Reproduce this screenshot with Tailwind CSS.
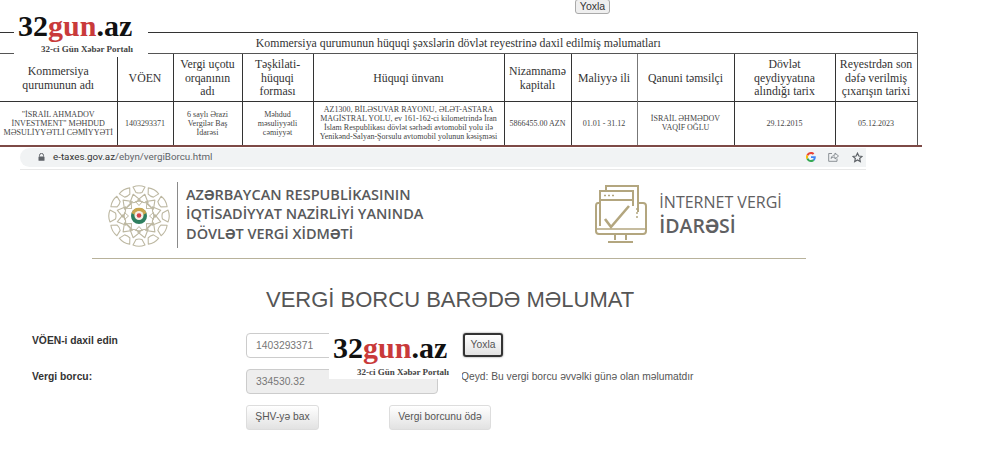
<!DOCTYPE html>
<html lang="az">
<head>
    <meta charset="UTF-8">
    <script src="https://cdn.jsdelivr.net/npm/@tailwindcss/browser@4"></script>
    <title>Vergi borcu</title>
</head>
<body class="bg-white">
<div class="relative w-[1000px] h-[452px] overflow-hidden font-['Liberation_Sans',sans-serif]">

    <!-- top button -->
    <div class="h-[33px] pl-[575px]">
        <button class="block w-[35px] h-[15px] -mt-px border border-[#aaa] rounded-[3px] bg-[#efefef] text-[10.5px] leading-[13px] text-[#333]">Yoxla</button>
    </div>

    <!-- registry table -->
    <table class="table-fixed border-collapse w-[917px] font-['Liberation_Serif',serif] text-[#333] text-center">
        <colgroup>
            <col class="w-[117px]"><col class="w-[56px]"><col class="w-[69px]"><col class="w-[71px]"><col class="w-[191px]"><col class="w-[67px]"><col class="w-[66px]"><col class="w-[97px]"><col class="w-[101px]"><col class="w-[82px]">
        </colgroup>
        <tbody>
            <tr class="h-[21px] border-t border-[#333]">
                <td colspan="10" class="border-r border-b border-[#555] text-[11.8px] leading-[14px] p-0">Kommersiya qurumunun hüquqi şəxslərin dövlət reyestrinə daxil edilmiş məlumatları</td>
            </tr>
            <tr class="h-[48px] text-[11.8px] leading-[13.4px] border-b border-[#333]">
                <td class="border-r border-[#333] p-0 pt-[2px]">Kommersiya<br>qurumunun adı</td>
                <td class="border-r border-[#333] p-0 pt-[2px]">VÖEN</td>
                <td class="border-r border-[#333] p-0 pt-[2px]">Vergi uçotu<br>orqanının<br>adı</td>
                <td class="border-r border-[#333] p-0 pt-[2px]">Təşkilati-<br>hüquqi<br>forması</td>
                <td class="border-r border-[#333] p-0 pt-[2px]">Hüquqi ünvanı</td>
                <td class="border-r border-[#333] p-0 pt-[2px]">Nizamnamə<br>kapitalı</td>
                <td class="border-r border-[#777] p-0 pt-[2px]">Maliyyə ili</td>
                <td class="border-r border-[#333] p-0 pt-[2px]">Qanuni təmsilçi</td>
                <td class="border-r border-[#333] p-0 pt-[2px]">Dövlət<br>qeydiyyatına<br>alındığı tarix</td>
                <td class="border-r border-[#555] p-0 pt-[2px]">Reyestrdən son<br>dəfə verilmiş<br>çıxarışın tarixi</td>
            </tr>
            <tr class="h-[43px] text-[8px] leading-[9px] text-[#444]">
                <td class="border-r border-[#333] p-0 text-[8.1px]">"İSRAİL AHMADOV<br>İNVESTMENT" MƏHDUD<br>MƏSULİYYƏTLİ CƏMİYYƏTİ</td>
                <td class="border-r border-[#333] p-0">1403293371</td>
                <td class="border-r border-[#333] p-0">6 saylı Ərazi<br>Vergilər Baş<br>İdarəsi</td>
                <td class="border-r border-[#333] p-0">Məhdud<br>məsuliyyətli<br>cəmiyyət</td>
                <td class="border-r border-[#333] p-0">AZ1300, BİLƏSUVAR RAYONU, ƏLƏT-ASTARA<br>MAGİSTRAL YOLU, ev 161-162-ci kilometrində İran<br>İslam Respublikası dövlət sərhədi avtomobil yolu ilə<br>Yenikənd-Salyan-Şorsulu avtomobil yolunun kəsişməsi</td>
                <td class="border-r border-[#333] p-0">5866455.00 AZN</td>
                <td class="border-r border-[#777] p-0">01.01 - 31.12</td>
                <td class="border-r border-[#333] p-0">İSRAİL ƏHMƏDOV<br>VAQİF OĞLU</td>
                <td class="border-r border-[#333] p-0">29.12.2015</td>
                <td class="border-r border-[#555] p-0">05.12.2023</td>
            </tr>
        </tbody>
    </table>
    <div class="w-[922px] h-[2px] bg-[#7d4a46]"></div>

    <!-- address bar -->
    <div class="ml-[20px] w-[846px] h-[19px] mt-[1px] flex items-center bg-[#f1f3f4] rounded-l-[10px] pl-[18px] pr-[4px] text-[#5f6368]">
        <svg class="w-[7px] h-[8px] mr-[8px]" viewBox="0 0 7 8"><path d="M1.500 3.500V2.400a2 2 0 0 1 4 0v1.100" fill="none" stroke="#5f6368"/><rect x="0.500" y="3.400" width="6" height="4.400" rx="0.600" fill="#5f6368"/></svg>
        <span class="text-[9.8px] leading-[12px] -mt-px font-['Roboto',sans-serif]"><span class="text-[#333]">e-taxes.gov.az</span>/ebyn/vergiBorcu.html</span>
        <svg class="ml-auto w-[10px] h-[10px]" viewBox="0 0 48 48">
            <path fill="#EA4335" d="M24 9.500c3.500 0 6.700 1.200 9.200 3.600l6.900-6.900C35.900 2.400 30.500 0 24 0 14.600 0 6.500 5.400 2.600 13.200l8 6.200C12.500 13.700 17.800 9.500 24 9.500z"/>
            <path fill="#4285F4" d="M47 24.500c0-1.600-.1-3.100-.4-4.500H24v9h12.900c-.6 3-2.200 5.500-4.700 7.200l7.700 6C44.400 37.600 47 31.600 47 24.500z"/>
            <path fill="#FBBC05" d="M10.500 28.600a14.500 14.500 0 0 1 0-9.200l-8-6.200a24 24 0 0 0 0 21.600l8-6.200z"/>
            <path fill="#34A853" d="M24 48c6.500 0 11.900-2.100 15.900-5.800l-7.700-6c-2.200 1.400-4.900 2.300-8.200 2.300-6.200 0-11.500-4.200-13.400-9.900l-8 6.200C6.500 42.600 14.600 48 24 48z"/>
        </svg>
        <svg class="ml-[12px] w-[11px] h-[10px]" viewBox="0 0 11 10" fill="none" stroke="#80868b" stroke-width="0.900"><path d="M4 1.500H0.700V9.300H9V6.500"/><path d="M3 6.500C3.500 4 5.500 3 7 3V1l3.500 3L7 7V5C5.500 5 4 5.300 3 6.500z"/></svg>
        <svg class="ml-[13px] mr-[-1px] w-[11px] h-[11px]" viewBox="0 0 24 24" fill="none" stroke="#5f6368" stroke-width="2.600"><path d="M12 2.500l2.900 6.200 6.800.8-5 4.600 1.400 6.700-6.100-3.400-6.100 3.400 1.400-6.700-5-4.600 6.800-.8z"/></svg>
    </div>
    <div class="ml-[20px] w-[846px] h-px mt-[2px] bg-[#e8e8e8]"></div>

    <!-- page header -->
    <div class="ml-[92px] w-[714px] h-[89px] border-b border-[#b8b29b] flex items-start pt-[12px]">
        <svg class="ml-[15px] mt-[2px] w-[64px] h-[64px] shrink-0" viewBox="-32 -32 64 64">
            <defs>
                <path id="outer" d="M-6 -29 Q0 -31.500 6 -29 L3 -23.500 Q0 -22.500 -3 -23.500 Z" fill="none" stroke="#bdb8a2" stroke-width="1.100" stroke-linejoin="round"/>
                <path id="middle" d="M0 -22.500 L5.500 -15 Q0 -13.500 -5.500 -15 Z" fill="none" stroke="#bdb8a2" stroke-width="1.100" stroke-linejoin="round"/>
                <path id="inner" d="M-3.500 -14.500 Q0 -15.500 3.500 -14.500 L0 -10.500 Z" fill="none" stroke="#bdb8a2" stroke-width="1" stroke-linejoin="round"/>
            </defs>
            <use href="#outer"/><use href="#outer" transform="rotate(30)"/><use href="#outer" transform="rotate(60)"/><use href="#outer" transform="rotate(90)"/><use href="#outer" transform="rotate(120)"/><use href="#outer" transform="rotate(150)"/><use href="#outer" transform="rotate(180)"/><use href="#outer" transform="rotate(210)"/><use href="#outer" transform="rotate(240)"/><use href="#outer" transform="rotate(270)"/><use href="#outer" transform="rotate(300)"/><use href="#outer" transform="rotate(330)"/>
            <use href="#middle" transform="rotate(15)"/><use href="#middle" transform="rotate(45)"/><use href="#middle" transform="rotate(75)"/><use href="#middle" transform="rotate(105)"/><use href="#middle" transform="rotate(135)"/><use href="#middle" transform="rotate(165)"/><use href="#middle" transform="rotate(195)"/><use href="#middle" transform="rotate(225)"/><use href="#middle" transform="rotate(255)"/><use href="#middle" transform="rotate(285)"/><use href="#middle" transform="rotate(315)"/><use href="#middle" transform="rotate(345)"/>
            <use href="#inner"/><use href="#inner" transform="rotate(45)"/><use href="#inner" transform="rotate(90)"/><use href="#inner" transform="rotate(135)"/><use href="#inner" transform="rotate(180)"/><use href="#inner" transform="rotate(225)"/><use href="#inner" transform="rotate(270)"/><use href="#inner" transform="rotate(315)"/>
            <circle r="8" fill="#2f7f5f"/>
            <path d="M-7.500 -3A8 8 0 0 1 7.500 -3L4 -1H-4Z" fill="#c9a64f"/>
            <circle r="4.500" cy="-0.500" fill="#f4f0e6"/>
            <circle r="2.300" cy="-0.500" fill="#d8434b"/>
        </svg>
        <div class="ml-[6px] w-[9px] h-[66px] border-l border-[#8a8a8a] shrink-0"></div>
        <div class="mt-[3px] text-[14.5px] leading-[19.600px] font-semibold font-['Open_Sans',sans-serif] text-[#58595b] whitespace-nowrap">AZƏRBAYCAN RESPUBLİKASININ<br>İQTİSADİYYAT NAZİRLİYİ YANINDA<br>DÖVLƏT VERGİ XİDMƏTİ</div>
        <svg class="ml-[172px] mt-[3px] w-[52px] h-[60px] shrink-0" viewBox="0 0 52 60" fill="none" stroke="#b3a67f" stroke-width="2">
            <path d="M11 6V1H43V27"/>
            <path d="M5 41V6H38V21"/>
            <path d="M5 15H38"/>
            <path d="M9 10.500H11M13 10.500H15M17 10.500H19" stroke-width="1.500"/>
            <path d="M5 18H3Q1 18 1 21V46Q1 49 4 49H48Q51 49 51 46V21Q51 18 48 18H44"/>
            <path d="M1 44H51" stroke-width="1.500"/>
            <path d="M10 34L16 42L34 21" stroke-width="2.600"/>
            <path d="M20 50V55M31 50V55"/>
            <path d="M13 57H38"/>
            <path d="M42 23V25M42 27V29M42 31V33" stroke-width="1.500"/>
        </svg>
        <div class="ml-[12px] mt-[8px] font-['Open_Sans',sans-serif] text-[#5f6062] whitespace-nowrap">
            <div class="text-[16px] leading-[24px]">İNTERNET VERGİ</div>
            <div class="text-[19.5px] leading-[24px] font-semibold">İDARƏSİ</div>
        </div>
    </div>

    <h1 class="mt-[28px] ml-[266px] text-[22px] leading-[26px] text-[#555] whitespace-nowrap">VERGİ BORCU BARƏDƏ MƏLUMAT</h1>

    <!-- form -->
    <div class="mt-[20px] ml-[32px] text-[10.3px] text-[#555]">
        <div class="flex h-[25px]">
            <label class="w-[214px] pt-px font-bold text-[#333] leading-[14px]">VÖEN-i daxil edin</label>
            <div class="w-[192px] h-[25px] border border-[#ccc] rounded-[4px] px-[9px] leading-[23px] text-[#777]">1403293371</div>
            <button class="ml-[25px] w-[40px] h-[24px] border-2 border-[#333] rounded-[3px] bg-gradient-to-b from-white to-[#e2e2e2] shadow-[0_0_2px_#777] text-[#555]">Yoxla</button>
        </div>
        <div class="flex h-[25px] mt-[11px]">
            <label class="w-[214px] pt-px font-bold text-[#333] leading-[14px]">Vergi borcu:</label>
            <div class="w-[192px] h-[25px] border border-[#ccc] rounded-[4px] px-[9px] leading-[23px] bg-[#eee] text-[#777]">334530.32</div>
            <span class="ml-[23px] leading-[16px] text-[10.25px]">Qeyd: Bu vergi borcu əvvəlki günə olan məlumatdır</span>
        </div>
        <div class="flex mt-[11px] pl-[214px]">
            <button class="w-[73px] h-[25px] border border-[#ddd] rounded-[3px] bg-gradient-to-b from-white to-[#e2e2e2] text-[#555]">ŞHV-yə bax</button>
            <button class="ml-[70px] w-[102px] h-[25px] border border-[#ddd] rounded-[3px] bg-gradient-to-b from-white to-[#e2e2e2] text-[#555]">Vergi borcunu ödə</button>
        </div>
    </div>

    <!-- watermark logos over the collage -->
    <div class="absolute left-[14px] top-[14px] w-[134px] h-[43px] bg-white font-['Liberation_Serif',serif] font-bold">
        <div class="-mt-[3px] pl-[4px] text-[30px] leading-[30px] text-[#111] whitespace-nowrap">32<span class="text-[#c93a3a]">gun</span>.az</div>
        <div class="text-[9px] leading-[10px] mt-[3px] pl-[27px] text-[#444] whitespace-nowrap">32-ci Gün Xəbər Portalı</div>
    </div>
    <div class="absolute left-[329px] top-[333px] w-[133px] h-[46px] bg-white font-['Liberation_Serif',serif] font-bold">
        <div class="text-[30px] leading-[30px] pl-[4px] text-[#111] whitespace-nowrap">32<span class="text-[#c93a3a]">gun</span>.az</div>
        <div class="text-[9px] leading-[10px] mt-[4px] pl-[28px] text-[#444] whitespace-nowrap">32-ci Gün Xəbər Portalı</div>
    </div>
</div>
</body>
</html>
